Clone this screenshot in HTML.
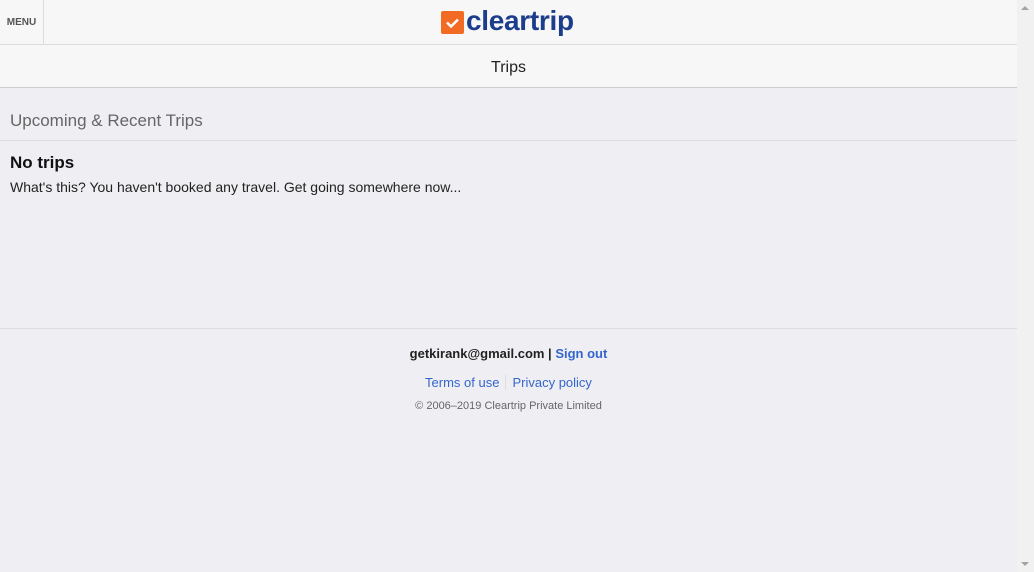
<!DOCTYPE html>
<html><head><style>
body{margin:0;width:1034px;height:572px;overflow:hidden;background:#efeff3;font-family:"Liberation Sans",sans-serif;position:relative}
.main{position:absolute;left:0;top:0;width:1017px;height:572px}
.sb{position:absolute;left:1017px;top:0;width:17px;height:572px;background:#f1f1f1}
.hdr{height:44px;background:#f7f7f7;border-bottom:1px solid #ddd;position:relative}
.menu{position:absolute;left:0;top:2px;width:43px;height:42px;font-size:10px;font-weight:bold;color:#555;line-height:42px;text-align:center}
.mline{position:absolute;left:43px;top:0;width:1px;height:44px;background:#ddd}
.logo{position:absolute;left:441px;top:7px;display:flex;align-items:center}
.box{width:23px;height:23px;background:#f26b25;border-radius:2px;position:relative}
.lt{font-size:28px;color:#1c3c8c;font-weight:bold;margin-left:2px;line-height:30px;letter-spacing:-0.3px;position:relative;top:-1px}
.trips{height:42px;background:#f7f7f7;border-bottom:1px solid #ccc;text-align:center;line-height:45px;font-size:16px;color:#222}
h2{font-weight:normal;font-size:17px;color:#666;margin:0;padding:23px 10px 9px;border-bottom:1px solid #ddd}
h3{font-size:17px;margin:12px 10px 6px;color:#111}
p{margin:0 10px;font-size:14px;color:#222}
.foot{position:absolute;top:328px;left:0;width:1017px;border-top:1px solid #ddd;text-align:center}
.em{font-size:13px;font-weight:bold;color:#222;margin-top:17px}
.em a{color:#3366cc}
.links{font-size:13px;color:#3366cc;margin-top:14px}
.links span{padding:0 6px}
.cp{font-size:11px;color:#666;margin-top:10px}
</style></head><body>
<div class="main">
<div class="hdr"><div class="menu">MENU</div><div class="mline"></div>
<div class="logo"><div class="box"><svg width="23" height="23" viewBox="0 0 23 23"><path d="M6 11.5l4 4 7-7" stroke="#fff" stroke-width="2.5" fill="none"/></svg></div><span class="lt">cleartrip</span></div></div>
<div class="trips">Trips</div>
<h2>Upcoming &amp; Recent Trips</h2>
<h3>No trips</h3>
<p>What's this? You haven't booked any travel. Get going somewhere now...</p>
<div class="foot">
<div class="em">getkirank@gmail.com | <a>Sign out</a></div>
<div class="links"><span style="border-right:1px solid #ddd">Terms of use</span><span>Privacy policy</span></div>
<div class="cp">© 2006–2019 Cleartrip Private Limited</div>
</div>
</div>
<div class="sb"><div style="position:absolute;left:4px;top:6px;border:4px solid transparent;border-bottom:4px solid #a3a3a3;border-top:0"></div><div style="position:absolute;left:4px;bottom:6px;border:4px solid transparent;border-top:4px solid #a3a3a3;border-bottom:0"></div></div>
</body></html>
